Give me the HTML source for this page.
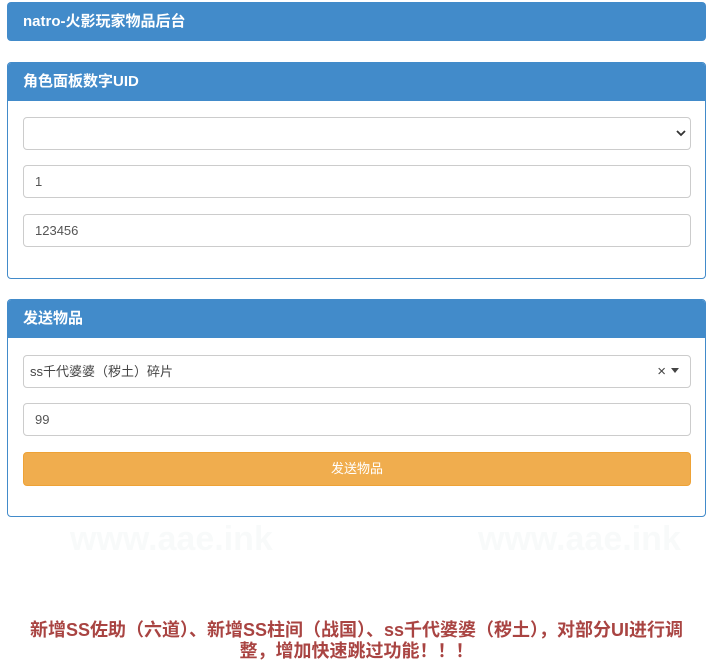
<!DOCTYPE html>
<html><head><meta charset="utf-8"><style>
*{box-sizing:border-box}
body{margin:0;width:713px;height:671px;background:#fff;font-family:"Liberation Sans","Noto Sans CJK SC",sans-serif;position:relative;overflow:hidden}
.hdr{position:absolute;left:7px;top:2px;width:699px;height:39px;background:#428bca;border-radius:4px;color:#fff;font-weight:bold;font-size:15px;line-height:39px;padding-left:16px}
.panel{position:absolute;left:7px;width:699px;border:1px solid #428bca;border-radius:4px;overflow:hidden}
.ph{background:#428bca;color:#fff;font-weight:bold;font-size:15px;height:38px;line-height:38px;padding-left:15px}
.f{position:absolute;left:15px;width:668px;height:33px;border:1px solid #ccc;border-radius:4px;font-size:13px;color:#555;line-height:31px;padding-left:11px;background:#fff}
.btn{position:absolute;left:15px;width:668px;height:34px;background:#f0ad4e;border:1px solid #eea236;border-radius:4px;color:#fff;font-size:13px;text-align:center;line-height:32px}
.note{position:absolute;left:0;width:713px;top:620px;text-align:center;color:#a94442;font-weight:bold;font-size:18px;line-height:21px;white-space:nowrap}
.wm{position:absolute;font-size:34px;font-weight:bold;color:rgba(200,210,215,0.12);font-family:"Liberation Sans",sans-serif}
</style></head><body>
<div class="hdr">natro-火影玩家物品后台</div>
<div class="panel" style="top:62px;height:217px">
<div class="ph">角色面板数字UID</div>
<div class="f" style="top:54px"><svg style="position:absolute;right:4px;top:12px" width="10" height="7" viewBox="0 0 10 7"><path d="M1 1l4 4 4-4" fill="none" stroke="#333" stroke-width="1.8"/></svg></div>
<div class="f" style="top:102px">1</div>
<div class="f" style="top:151px">123456</div>
</div>
<div class="panel" style="top:299px;height:218px">
<div class="ph">发送物品</div>
<div class="f" style="top:55px;padding-left:6px;color:#444">ss千代婆婆（秽土）碎片<span style="position:absolute;right:24px;top:0;font-size:15px">×</span><span style="position:absolute;right:11px;top:12px;border:4px solid transparent;border-top:5px solid #444"></span></div>
<div class="f" style="top:103px">99</div>
<div class="btn" style="top:152px">发送物品</div>
</div>
<div class="wm" style="left:70px;top:520px">www.aae.ink</div>
<div class="wm" style="left:478px;top:520px">www.aae.ink</div>
<div class="note">新增SS佐助（六道）、新增SS柱间（战国）、ss千代婆婆（秽土），对部分UI进行调<br>整，增加快速跳过功能！！！</div>
</body></html>
